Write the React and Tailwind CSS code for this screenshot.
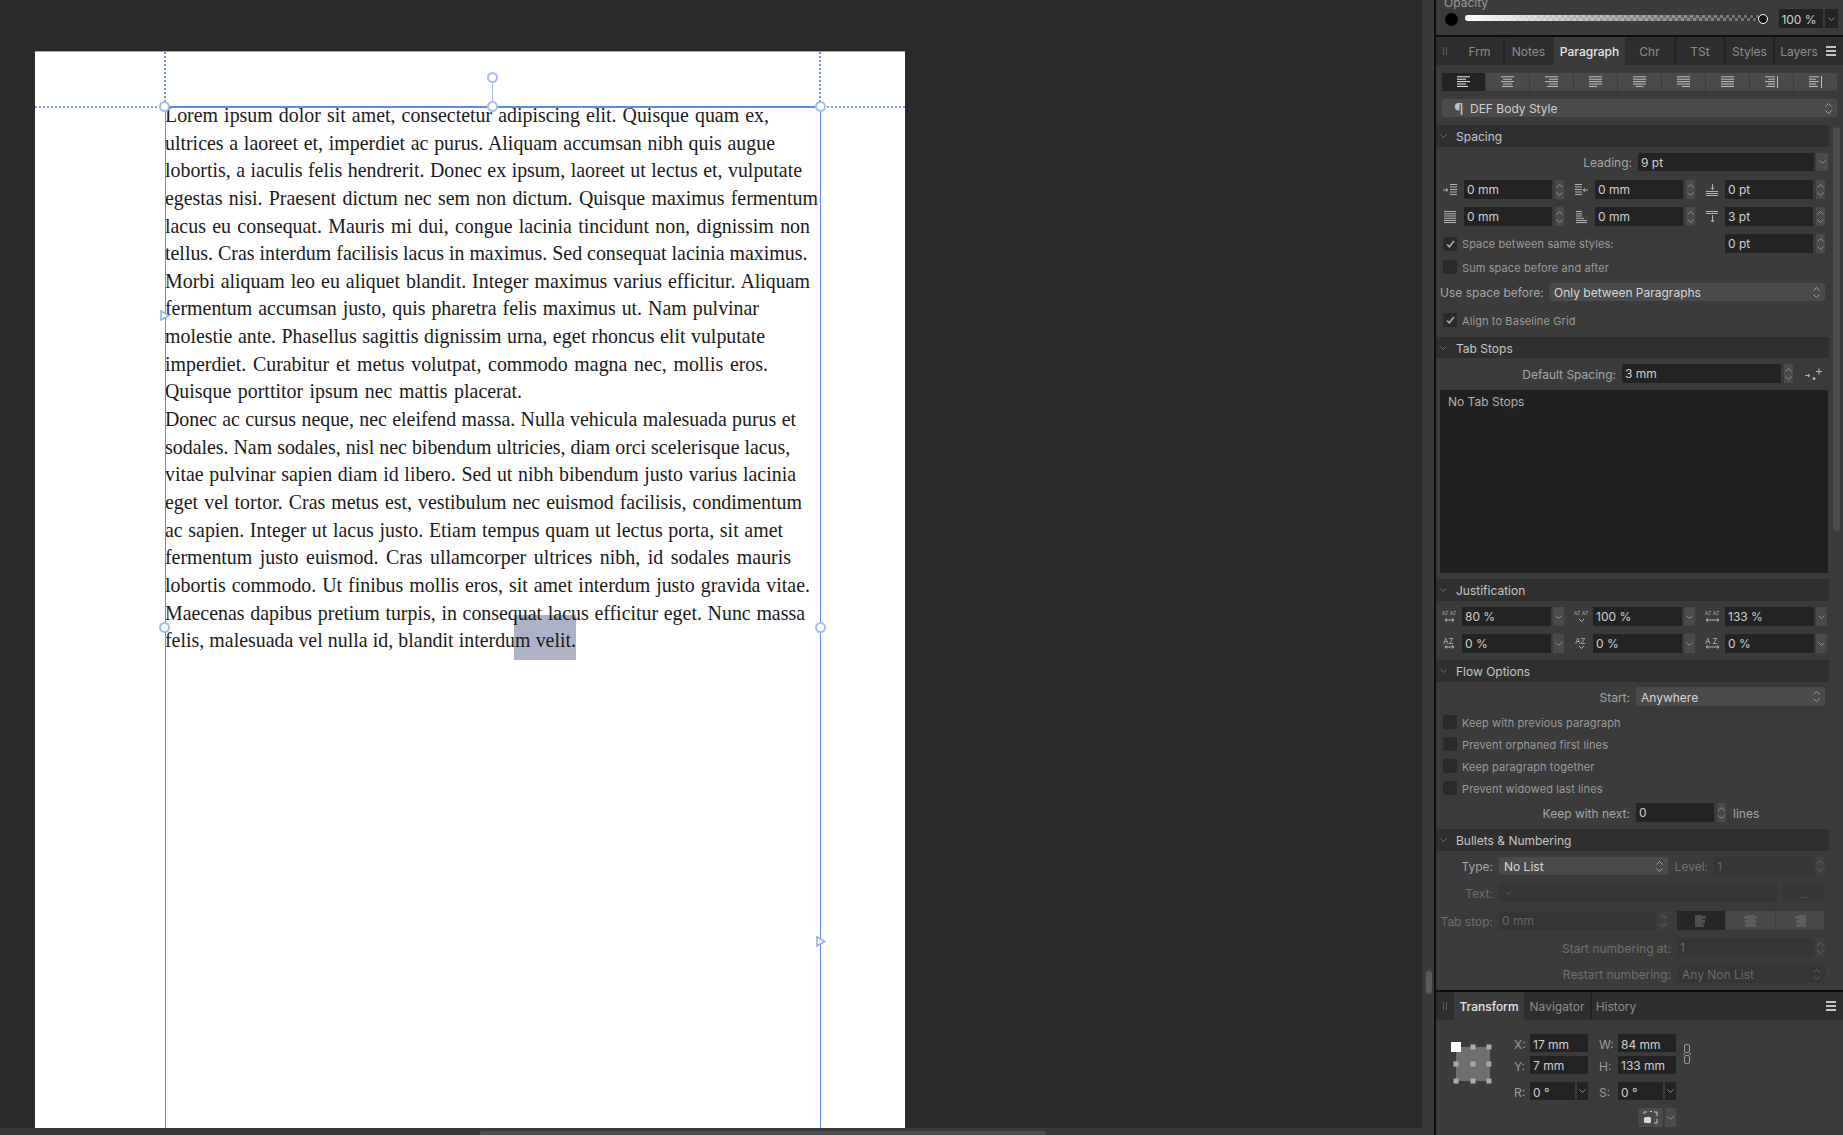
import React from "react";

const LINES = [
  ["Lorem ipsum dolor sit amet, consectetur adipiscing elit. Quisque quam ex,", 604],
  ["ultrices a laoreet et, imperdiet ac purus. Aliquam accumsan nibh quis augue", 610],
  ["lobortis, a iaculis felis hendrerit. Donec ex ipsum, laoreet ut lectus et, vulputate", 637],
  ["egestas nisi. Praesent dictum nec sem non dictum. Quisque maximus fermentum", 653],
  ["lacus eu consequat. Mauris mi dui, congue lacinia tincidunt non, dignissim non", 645],
  ["tellus. Cras interdum facilisis lacus in maximus. Sed consequat lacinia maximus.", 641],
  ["Morbi aliquam leo eu aliquet blandit. Integer maximus varius efficitur. Aliquam", 645],
  ["fermentum accumsan justo, quis pharetra felis maximus ut. Nam pulvinar", 594],
  ["molestie ante. Phasellus sagittis dignissim urna, eget rhoncus elit vulputate", 600],
  ["imperdiet. Curabitur et metus volutpat, commodo magna nec, mollis eros.", 603],
  ["Quisque porttitor ipsum nec mattis placerat.", 357],
  ["Donec ac cursus neque, nec eleifend massa. Nulla vehicula malesuada purus et", 631],
  ["sodales. Nam sodales, nisl nec bibendum ultricies, diam orci scelerisque lacus,", 624],
  ["vitae pulvinar sapien diam id libero. Sed ut nibh bibendum justo varius lacinia", 631],
  ["eget vel tortor. Cras metus est, vestibulum nec euismod facilisis, condimentum", 637],
  ["ac sapien. Integer ut lacus justo. Etiam tempus quam ut lectus porta, sit amet", 618],
  ["fermentum justo euismod. Cras ullamcorper ultrices nibh, id sodales mauris", 626],
  ["lobortis commodo. Ut finibus mollis eros, sit amet interdum justo gravida vitae.", 645],
  ["Maecenas dapibus pretium turpis, in consequat lacus efficitur eget. Nunc massa", 640],
  ["felis, malesuada vel nulla id, blandit interdum velit.", 411],
];

const Chev = ({ up, c = "#9a9a9a" }) => (
  <svg width="7" height="4" viewBox="0 0 7 4" className="block">
    <polyline points={up ? "0.5,3.5 3.5,0.5 6.5,3.5" : "0.5,0.5 3.5,3.5 6.5,0.5"} fill="none" stroke={c} strokeWidth="0.9" />
  </svg>
);
const Stepper = ({ dim }) => (
  <div className={`ml-[3px] w-[9px] h-full rounded-[1px] flex flex-col items-center justify-center gap-[4px] ${dim ? "bg-[#404040]" : "bg-[#4a4a4a]"}`}>
    <Chev up c={dim ? "#666" : "#999"} />
    <Chev c={dim ? "#666" : "#999"} />
  </div>
);
const UpDown = ({ dim }) => (
  <div className="absolute right-[5px] top-0 bottom-0 flex flex-col justify-center gap-[3px]">
    <Chev up c={dim ? "#666" : "#aaa"} />
    <Chev c={dim ? "#666" : "#aaa"} />
  </div>
);
const Drop = ({ w = "w-[11px]" }) => (
  <div className={`ml-[2px] h-full ${w} rounded-[1px] bg-[#4a4a4a] flex items-center justify-center`}>
    <Chev />
  </div>
);
const Input = ({ w, v, dim, pt = "pt-[2px]" }) => (
  <div className={`${w} ${pt} h-full pl-[3px] flex items-center text-[12px] ${dim ? "bg-[#363636] text-[#696969]" : "bg-[#232323] text-[#d0d0d0]"}`}>{v}</div>
);
const Select = ({ w, v, dim }) => (
  <div className={`${w} relative h-full pl-[5px] pt-[2px] rounded-[2px] flex items-center text-[12px] ${dim ? "bg-[#363636] text-[#696969]" : "bg-[#4a4a4a] text-[#d8d8d8]"}`}>
    {v}
    <UpDown dim={dim} />
  </div>
);
const Label = ({ w, children, dim }) => (
  <div className={`${w} shrink-0 text-right pr-[6px] pt-[2px] text-[12px] whitespace-nowrap ${dim ? "text-[#6e6e6e]" : "text-[#a6a6a6]"}`}>{children}</div>
);
const Header = ({ t, mt, h = "h-[22px]" }) => (
  <div className={`${mt} ${h} w-[393px] bg-[#2f2f2f] flex items-center pl-[4px] text-[12px] text-[#c6c6c6]`}>
    <Chev c="#777" />
    <span className="ml-[9px] pt-[2px]">{t}</span>
  </div>
);
const Check = ({ t, on, mt }) => (
  <div className={`${mt} h-[14px] pl-[7px] flex items-center`}>
    <div className="w-[14px] h-[14px] rounded-[2px] bg-[#2a2a2a] flex items-center justify-center">
      {on && (
        <svg width="9" height="8" viewBox="0 0 9 8">
          <polyline points="1,4.5 3.3,6.8 8,1" fill="none" stroke="#b0b0b0" strokeWidth="1.5" />
        </svg>
      )}
    </div>
    <span className="ml-[5px] pt-[2px] text-[11px] text-[#9a9a9a] tracking-[0.1px]">{t}</span>
  </div>
);

const AlignIcon = ({ lens, align = "left", bar, c = "#c0c0c0" }) => (
  <svg width="15" height="12" viewBox="0 0 15 12">
    {lens.map((l, i) => {
      const W = bar ? 10 : 13;
      const x = align === "left" ? 1 : align === "center" ? 1 + (W - l) / 2 : 1 + W - l;
      return <rect key={i} x={x} y={i * 2.4 + 0.3} width={l} height="1" fill={c} />;
    })}
    {bar && <rect x="13" y="0" width="1" height="12" fill={c} />}
  </svg>
);
const ALIGN = [
  { lens: [13, 9, 13, 9, 11], c: "#f0f0f0" },
  { lens: [13, 9, 13, 9, 11], align: "center" },
  { lens: [13, 9, 13, 9, 11], align: "right" },
  { lens: [13, 13, 13, 13, 8] },
  { lens: [13, 13, 13, 13, 8], align: "center" },
  { lens: [13, 13, 13, 13, 8], align: "right" },
  { lens: [13, 13, 13, 13, 13] },
  { lens: [10, 7, 10, 7, 9], align: "right", bar: true },
  { lens: [10, 7, 10, 7, 9], bar: true },
];

const S = "#b4b4b4";
const IconIndentL = () => (
  <svg width="15" height="12" viewBox="0 0 15 12" fill="none" stroke={S}>
    <path d="M0 6h4M3 4.500 5 6 3 7.500" />
    <path d="M7 .5h7M7 3h7M7 5.500h7M7 8h7M7 10.500h7" />
  </svg>
);
const IconIndentR = () => (
  <svg width="13" height="12" viewBox="0 0 13 12" fill="none" stroke={S}>
    <path d="M0 .5h7M0 3h7M0 5.500h7M0 8h7M0 10.500h7" />
    <path d="M13 6H9M10 4.500 8 6l2 1.500" />
  </svg>
);
const IconAbove = () => (
  <svg width="13" height="12" viewBox="0 0 13 12" fill="none" stroke={S}>
    <path d="M6.500 0v5M5 3.500 6.500 5.500 8 3.500" />
    <path d="M0 7.500h12M0 9.500h12M0 11.500h12" />
  </svg>
);
const IconBetween = () => (
  <svg width="13" height="12" viewBox="0 0 13 12" fill="none" stroke={S}>
    <path d="M0 .5h12M0 2.500h12" />
    <path d="M6.500 4v7M5 9 6.500 11 8 9" />
  </svg>
);
const IconLinesA = () => (
  <svg width="13" height="12" viewBox="0 0 13 12" fill="none" stroke={S}>
    <path d="M1 .5h12M1 2.800h12M1 5h12M1 7.300h12M1 9.500h12M1 11.500h12" />
  </svg>
);
const IconLinesB = () => (
  <svg width="13" height="12" viewBox="0 0 13 12" fill="none" stroke={S}>
    <path d="M1 .5h6M1 2.800h6M1 5h6M1 7.300h8M1 9.500h11M1 11.500h11" />
  </svg>
);
const Az = ({ two, mark = "lr", wide }) => (
  <svg width="15" height="13" viewBox="0 0 15 13" fill="none" stroke={S}>
    {two ? (
      <>
        <text x="0" y="5" fontSize="4.600" fill={S} stroke="none" fontFamily="Inter">AZ</text>
        <text x="8" y="5" fontSize="4.600" fill={S} stroke="none" fontFamily="Inter">AZ</text>
      </>
    ) : (
      <text x={wide ? 0 : 1} y="6.500" fontSize="8" fill={S} stroke="none" fontFamily="Inter" letterSpacing={wide ? 2 : 0}>AZ</text>
    )}
    {mark === "lr" ? (
      <path d={wide ? "M1 10h13M3 8.500 1 10l2 1.500M12 8.500 14 10l-2 1.500" : "M3 10h9M5 8.500 3 10l2 1.500M10 8.500 12 10l-2 1.500"} />
    ) : (
      <path d="M5 9l2.500 2.500L10 9" />
    )}
  </svg>
);
const TabGlyph = ({ side, c }) => (
  <svg width="13" height="12" viewBox="0 0 13 12" fill={c}>
    {side === "l" && <path d="M0 0h7v1h4v3H7v1h3v3H7v1h2v3H0Z" />}
    {side === "c" && <path d="M3 0h7v1h3v3h-3v1h2v3h-2v1h2v3H1V9h2V8H1V5h2V4H0V1h3Z" />}
    {side === "r" && <path d="M6 0h7v12H4V9h2V8H3V5h3V4H2V1h4Z" />}
  </svg>
);

const Tab = ({ t, w, active, gap, nudge = "" }) => (
  <div className={`${w} ${gap ? "mr-[2px]" : ""} ${nudge} h-full pt-[1px] flex items-center justify-center text-[12px] ${active ? "bg-[#3b3b3b] text-[#e6e6e6] font-medium" : "bg-[#2e2e2e] text-[#8c8c8c]"}`}>{t}</div>
);
const Grip = ({ w }) => (
  <div className={`${w} h-full bg-[#2e2e2e] pl-[7px] flex items-center gap-[2px]`}>
    <div className="w-px h-[8px] bg-[#5c5c5c]" />
    <div className="w-px h-[8px] bg-[#5c5c5c]" />
  </div>
);
const Burger = () => (
  <div className="flex-1 h-full bg-[#2e2e2e] flex flex-col items-end justify-center gap-[2px] pr-[7px]">
    <div className="w-[10px] h-[2px] bg-[#c4c4c4]" />
    <div className="w-[10px] h-[2px] bg-[#c4c4c4]" />
    <div className="w-[10px] h-[2px] bg-[#c4c4c4]" />
  </div>
);

const Handle = ({ cls }) => (
  <div className={`absolute ${cls} w-[11px] h-[11px] rounded-full bg-white border-2 border-[#a3bdf2]`} />
);
const Tri = ({ cls }) => (
  <svg width="10" height="11" viewBox="0 0 10 11" className={`absolute ${cls}`}>
    <path d="M1 1 9 5.500 1 10Z" fill="#fff" stroke="#8fb0f0" strokeWidth="1.500" />
  </svg>
);
const TL = "w-[16px] pt-[3px] text-[12px] text-[#9a9a9a]";
const TR = "ml-[11px] w-[19px] pt-[3px] text-[12px] text-[#9a9a9a]";
const P1 = "pt-[1px]";
const P3 = "pt-[3px]";

export default function App() {
  return (
    <div className="w-[1843px] h-[1135px] flex overflow-hidden bg-[#2a2a2a] [font-family:Inter,sans-serif]">
      <div className="w-[1422px] h-full flex flex-col">
        <div className="flex-1 min-h-0 pt-[51px] pl-[35px]">
          <div className="relative w-[870px] h-full bg-white border-t border-[#a8a8a8]">
            <div className="absolute left-[479px] top-[563px] w-[62px] h-[45px] bg-[#adb3c4]" />
            <div className="relative pt-[50px] pl-[130px] [font-family:Liberation_Serif,serif] text-[19.9px] leading-[27.64px] text-[#1a1a1a]">
              {LINES.map(([t, w], i) => (
                <div key={i} className="whitespace-nowrap [text-align-last:justify]" style={{ width: w }}>{t}</div>
              ))}
            </div>
            <div className="absolute left-0 right-0 top-[54px] h-[1.5px] bg-[repeating-linear-gradient(90deg,#7f9fe0_0_2px,transparent_2px_4px)]" />
            <div className="absolute left-[129px] top-0 h-[55px] w-[1.5px] bg-[repeating-linear-gradient(180deg,#6f92d8_0_2px,transparent_2px_4px)]" />
            <div className="absolute left-[784px] top-0 h-[55px] w-[1.5px] bg-[repeating-linear-gradient(180deg,#6f92d8_0_2px,transparent_2px_4px)]" />
            <div className="absolute left-[130px] top-[54px] w-[655px] h-[1.5px] bg-[#5f8ae6]" />
            <div className="absolute left-[129.5px] top-[54px] bottom-0 w-[1.5px] bg-[#5f8ae6]" />
            <div className="absolute left-[784.5px] top-[54px] bottom-0 w-[1.5px] bg-[#5f8ae6]" />
            <div className="absolute left-[457px] top-[26px] h-[28px] w-[1px] bg-[#a3bdf2]" />
            <Handle cls="left-[452px] top-[20px]" />
            <Handle cls="left-[452px] top-[49px]" />
            <Handle cls="left-[124px] top-[49px]" />
            <Handle cls="left-[780px] top-[49px]" />
            <Handle cls="left-[124px] top-[570px]" />
            <Handle cls="left-[780px] top-[570px]" />
            <Tri cls="left-[125px] top-[258px]" />
            <Tri cls="left-[781px] top-[884px]" />
          </div>
        </div>
        <div className="h-[7px] shrink-0 bg-[#3a3a3a] pl-[480px] pt-[3px]">
          <div className="w-[566px] h-[4px] rounded-t-[2px] bg-[#4e4e4e]" />
        </div>
      </div>

      <div className="w-[12px] h-full bg-[#3a3a3a] pt-[971px] pl-[4px]">
        <div className="w-[6px] h-[23px] rounded-[3px] bg-[#5a5a5a]" />
      </div>
      <div className="w-[2px] h-full bg-[#0e0e0e]" />

      <div className="relative w-[407px] h-full bg-[#3b3b3b] flex flex-col">
        <div className="absolute left-[397px] top-[127px] w-[7px] h-[404px] rounded-[4px] bg-[#4c4c4c]" />

        <div className="h-[35px] shrink-0 relative">
          <div className="absolute left-[8px] top-[-6px] text-[12px] text-[#9a9a9a]">Opacity</div>
          <div className="absolute left-[9px] top-[13px] w-[13px] h-[13px] rounded-full bg-black" />
          <div className="absolute left-[29px] top-[15px] w-[296px] h-[6px] rounded-full bg-[linear-gradient(90deg,#ffffff,transparent),repeating-conic-gradient(#6a6a6a_0_25%,#2a2a2a_0_50%)] bg-[length:100%_100%,6px_6px]" />
          <div className="absolute left-[322px] top-[14px] w-[10px] h-[10px] rounded-full bg-[#111] border-[1.5px] border-white" />
          <div className="absolute left-[343px] top-[9px] w-[44px] h-[19px] bg-[#232323] pr-[4px] pt-[2px] flex items-center justify-center text-[12px] text-[#d0d0d0]">100 %</div>
          <div className="absolute left-[389px] top-[9px] w-[13px] h-[19px] bg-[#232323] rounded-[1px] flex items-center justify-center"><Chev /></div>
        </div>
        <div className="h-[2px] shrink-0 bg-[#0e0e0e]" />
        <div className="h-[28px] shrink-0 flex bg-[#232323]">
          <Grip w="w-[26px]" />
          <Tab t="Frm" w="w-[41px]" gap nudge="pr-[6px]" />
          <Tab t="Notes" w="w-[49px]" nudge="pr-[2px]" />
          <Tab t="Paragraph" w="w-[71px]" active />
          <Tab t="Chr" w="w-[49px]" gap />
          <Tab t="TSt" w="w-[48px]" gap />
          <Tab t="Styles" w="w-[47px]" gap />
          <Tab t="Layers" w="w-[50px]" nudge="pr-[2px]" />
          <Burger />
        </div>

        <div className="mt-[8px] h-[18px] ml-[6px] flex gap-[1px]">
          {ALIGN.map((a, i) => (
            <div key={i} className={`w-[43px] h-full flex items-center justify-center ${i === 0 ? "bg-[#232323]" : "bg-[#4a4a4a]"}`}>
              <AlignIcon {...a} />
            </div>
          ))}
        </div>
        <div className="mt-[8px] h-[18px] ml-[6px] w-[395px] relative bg-[#4a4a4a] rounded-[2px] flex items-center text-[12px] text-[#cfcfcf]">
          <span className="ml-[12px] w-[16px] pt-[2px] text-[16px] leading-[16px] text-[#c0c0c0]">¶</span>
          <span className="pt-[2px]">DEF Body Style</span>
          <UpDown />
        </div>

        <Header t="Spacing" mt="mt-[8px]" />
        <div className="mt-[6px] h-[18px] flex items-center">
          <Label w="w-[202px]">Leading:</Label>
          <Input w="w-[176px]" v="9 pt" />
          <Drop w="w-[12px]" />
        </div>
        <div className="mt-[9px] h-[19px] pl-[7px] flex items-center">
          <div className="w-[15px] mr-[6px]"><IconIndentL /></div>
          <Input w="w-[88px]" v="0 mm" pt={P1} /><Stepper />
          <div className="w-[13px] ml-[11px] mr-[7px]"><IconIndentR /></div>
          <Input w="w-[88px]" v="0 mm" pt={P1} /><Stepper />
          <div className="w-[13px] ml-[11px] mr-[6px]"><IconAbove /></div>
          <Input w="w-[88px]" v="0 pt" pt={P1} /><Stepper />
        </div>
        <div className="mt-[8px] h-[19px] pl-[7px] flex items-center">
          <div className="w-[15px] mr-[6px]"><IconLinesA /></div>
          <Input w="w-[88px]" v="0 mm" pt={P1} /><Stepper />
          <div className="w-[13px] ml-[11px] mr-[7px]"><IconLinesB /></div>
          <Input w="w-[88px]" v="0 mm" pt={P1} /><Stepper />
          <div className="w-[13px] ml-[11px] mr-[6px]"><IconBetween /></div>
          <Input w="w-[88px]" v="3 pt" pt={P1} /><Stepper />
        </div>
        <div className="mt-[8px] h-[19px] pr-[18px] flex items-center justify-between">
          <Check t="Space between same styles:" on />
          <div className="h-full flex">
            <Input w="w-[88px]" v="0 pt" pt={P1} /><Stepper />
          </div>
        </div>
        <Check t="Sum space before and after" mt="mt-[7px]" />
        <div className="mt-[9px] h-[18px] pl-[4px] flex items-center">
          <div className="w-[109px] pt-[2px] text-[12px] text-[#a6a6a6] whitespace-nowrap">Use space before:</div>
          <Select w="w-[276px]" v="Only between Paragraphs" />
        </div>
        <Check t="Align to Baseline Grid" on mt="mt-[12px]" />

        <Header t="Tab Stops" mt="mt-[10px]" h="h-[21px]" />
        <div className="mt-[6px] h-[19px] flex items-center">
          <Label w="w-[186px]">Default Spacing:</Label>
          <Input w="w-[159px]" v="3 mm" pt={P1} /><Stepper />
          <svg width="17" height="14" viewBox="0 0 17 14" className="ml-[12px]" fill="none" stroke={S}>
            <path d="M11 4.500h6M14 1.500v6M0 8.500h4M3 7 5 8.500 3 10" />
            <circle cx="9" cy="11.500" r="1.500" fill={S} stroke="none" />
          </svg>
        </div>
        <div className="mt-[7px] ml-[4px] w-[388px] h-[183px] bg-[#202020] pl-[8px] pt-[3px] text-[12px] text-[#b0b0b0]">No Tab Stops</div>

        <Header t="Justification" mt="mt-[6px]" />
        <div className="mt-[6px] h-[19px] pl-[6px] flex items-center">
          <div className="w-[15px] mr-[5px]"><Az two /></div>
          <Input w="w-[89px]" v="80 %" pt={P1} /><Drop />
          <div className="w-[15px] ml-[10px] mr-[4px]"><Az two mark="v" /></div>
          <Input w="w-[89px]" v="100 %" pt={P1} /><Drop />
          <div className="w-[15px] ml-[10px] mr-[5px]"><Az two wide /></div>
          <Input w="w-[89px]" v="133 %" pt={P1} /><Drop />
        </div>
        <div className="mt-[8px] h-[19px] pl-[6px] flex items-center">
          <div className="w-[15px] mr-[5px]"><Az /></div>
          <Input w="w-[89px]" v="0 %" pt={P1} /><Drop />
          <div className="w-[15px] ml-[10px] mr-[4px]"><Az mark="v" /></div>
          <Input w="w-[89px]" v="0 %" pt={P1} /><Drop />
          <div className="w-[15px] ml-[10px] mr-[5px]"><Az wide /></div>
          <Input w="w-[89px]" v="0 %" pt={P1} /><Drop />
        </div>

        <Header t="Flow Options" mt="mt-[7px]" />
        <div className="mt-[5px] h-[19px] flex items-center">
          <Label w="w-[200px]">Start:</Label>
          <Select w="w-[189px]" v="Anywhere" />
        </div>
        <Check t="Keep with previous paragraph" mt="mt-[9px]" />
        <Check t="Prevent orphaned first lines" mt="mt-[8px]" />
        <Check t="Keep paragraph together" mt="mt-[8px]" />
        <Check t="Prevent widowed last lines" mt="mt-[8px]" />
        <div className="mt-[8px] h-[19px] flex items-center">
          <Label w="w-[200px]">Keep with next:</Label>
          <Input w="w-[78px]" v="0" pt={P1} /><Stepper />
          <span className="ml-[7px] pt-[2px] text-[12px] text-[#a6a6a6]">lines</span>
        </div>

        <Header t="Bullets &amp; Numbering" mt="mt-[7px]" />
        <div className="mt-[6px] h-[18px] flex items-center">
          <Label w="w-[63px]">Type:</Label>
          <Select w="w-[169px]" v="No List" />
          <Label w="w-[46px]" dim>Level:</Label>
          <Input w="w-[99px]" v="1" dim /><Stepper dim />
        </div>
        <div className="mt-[8px] h-[19px] flex items-center">
          <Label w="w-[63px]" dim>Text:</Label>
          <div className="w-[278px] h-full bg-[#363636] pl-[6px] flex items-center"><Chev c="#666" /></div>
          <div className="ml-[6px] w-[41px] h-[16px] bg-[#363636] text-center text-[10px] leading-[18px] text-[#6e6e6e]">...</div>
        </div>
        <div className="mt-[9px] h-[19px] flex items-center">
          <Label w="w-[63px]" dim>Tab stop:</Label>
          <Input w="w-[157px]" v="0 mm" dim pt={P1} /><Stepper dim />
          <div className="ml-[9px] w-[147px] h-full flex gap-px">
            <div className="flex-1 bg-[#262626] flex items-center justify-center"><TabGlyph side="l" c="#4e4e4e" /></div>
            <div className="flex-1 bg-[#484848] flex items-center justify-center"><TabGlyph side="c" c="#5e5e5e" /></div>
            <div className="flex-1 bg-[#484848] flex items-center justify-center"><TabGlyph side="r" c="#5e5e5e" /></div>
          </div>
        </div>
        <div className="mt-[8px] h-[19px] flex items-center">
          <Label w="w-[241px]" dim>Start numbering at:</Label>
          <Input w="w-[136px]" v="1" dim pt={P1} /><Stepper dim />
        </div>
        <div className="mt-[8px] h-[18px] flex items-center">
          <Label w="w-[241px]" dim>Restart numbering:</Label>
          <Select w="w-[148px]" v="Any Non List" dim />
        </div>

        <div className="flex-1" />
        <div className="h-[2px] shrink-0 bg-[#0e0e0e]" />
        <div className="h-[28px] shrink-0 flex bg-[#232323]">
          <Grip w="w-[18px]" />
          <Tab t="Transform" w="w-[70px]" active />
          <Tab t="Navigator" w="w-[66px]" gap />
          <Tab t="History" w="w-[48px]" />
          <Burger />
        </div>
        <div className="h-[115px] shrink-0 flex relative">
          <svg width="44" height="44" viewBox="0 0 44 44" className="absolute left-[14px] top-[22px]">
            <rect x="6" y="5" width="34" height="34" fill="#6e6e6e" />
            {[6, 23, 39].map((x) => [5, 22, 39].map((y) => (
              <rect key={`${x}${y}`} x={x - 2.5} y={y - 2.5} width="5" height="5" fill="#acacac" />
            )))}
            <rect x="1" y="0" width="10" height="10" fill="#fff" />
          </svg>
          <div className="ml-[78px] pt-[14px] flex flex-col">
            <div className="flex items-center">
              <div className="flex flex-col gap-[4px]">
                <div className="h-[18px] flex items-center">
                  <div className={TL}>X:</div>
                  <Input w="w-[58px]" v="17 mm" pt={P3} />
                  <div className={TR}>W:</div>
                  <Input w="w-[58px]" v="84 mm" pt={P3} />
                </div>
                <div className="h-[18px] flex items-center">
                  <div className={TL}>Y:</div>
                  <Input w="w-[58px]" v="7 mm" />
                  <div className={TR}>H:</div>
                  <Input w="w-[58px]" v="133 mm" />
                </div>
              </div>
              <svg width="8" height="20" viewBox="0 0 8 20" className="ml-[7px]" fill="none" stroke="#9a9a9a">
                <rect x="1.500" y="0.500" width="5" height="8" rx="1.500" />
                <rect x="1.500" y="11.500" width="5" height="8" rx="1.500" />
                <path d="M0 10h2M6 10h2" />
              </svg>
            </div>
            <div className="mt-[8px] h-[18px] flex items-center">
              <div className={TL}>R:</div>
              <Input w="w-[45px]" v="0 °" pt={P3} />
              <div className="ml-[2px] w-[11px] h-full bg-[#232323] flex items-center justify-center"><Chev /></div>
              <div className={TR}>S:</div>
              <Input w="w-[45px]" v="0 °" pt={P3} />
              <div className="ml-[2px] w-[11px] h-full bg-[#232323] flex items-center justify-center"><Chev /></div>
            </div>
            <div className="mt-[8px] ml-[124px] h-[19px] flex">
              <div className="w-[25px] h-full rounded-[2px] bg-[#4a4a4a] flex items-center justify-center">
                <svg width="15" height="13" viewBox="0 0 15 13" fill="none" stroke="#c8c8c8">
                  <path d="M1 3V1h3M7 .5h2M11 1h3v4M14 8v4h-3" />
                  <rect x="1" y="6" width="7" height="6" rx="1.500" fill="#d8d8d8" stroke="none" />
                </svg>
              </div>
              <div className="ml-[2px] w-[11px] h-full rounded-[1px] bg-[#4a4a4a] flex items-center justify-center"><Chev /></div>
            </div>
          </div>
        </div>
      </div>
    </div>
  );
}
